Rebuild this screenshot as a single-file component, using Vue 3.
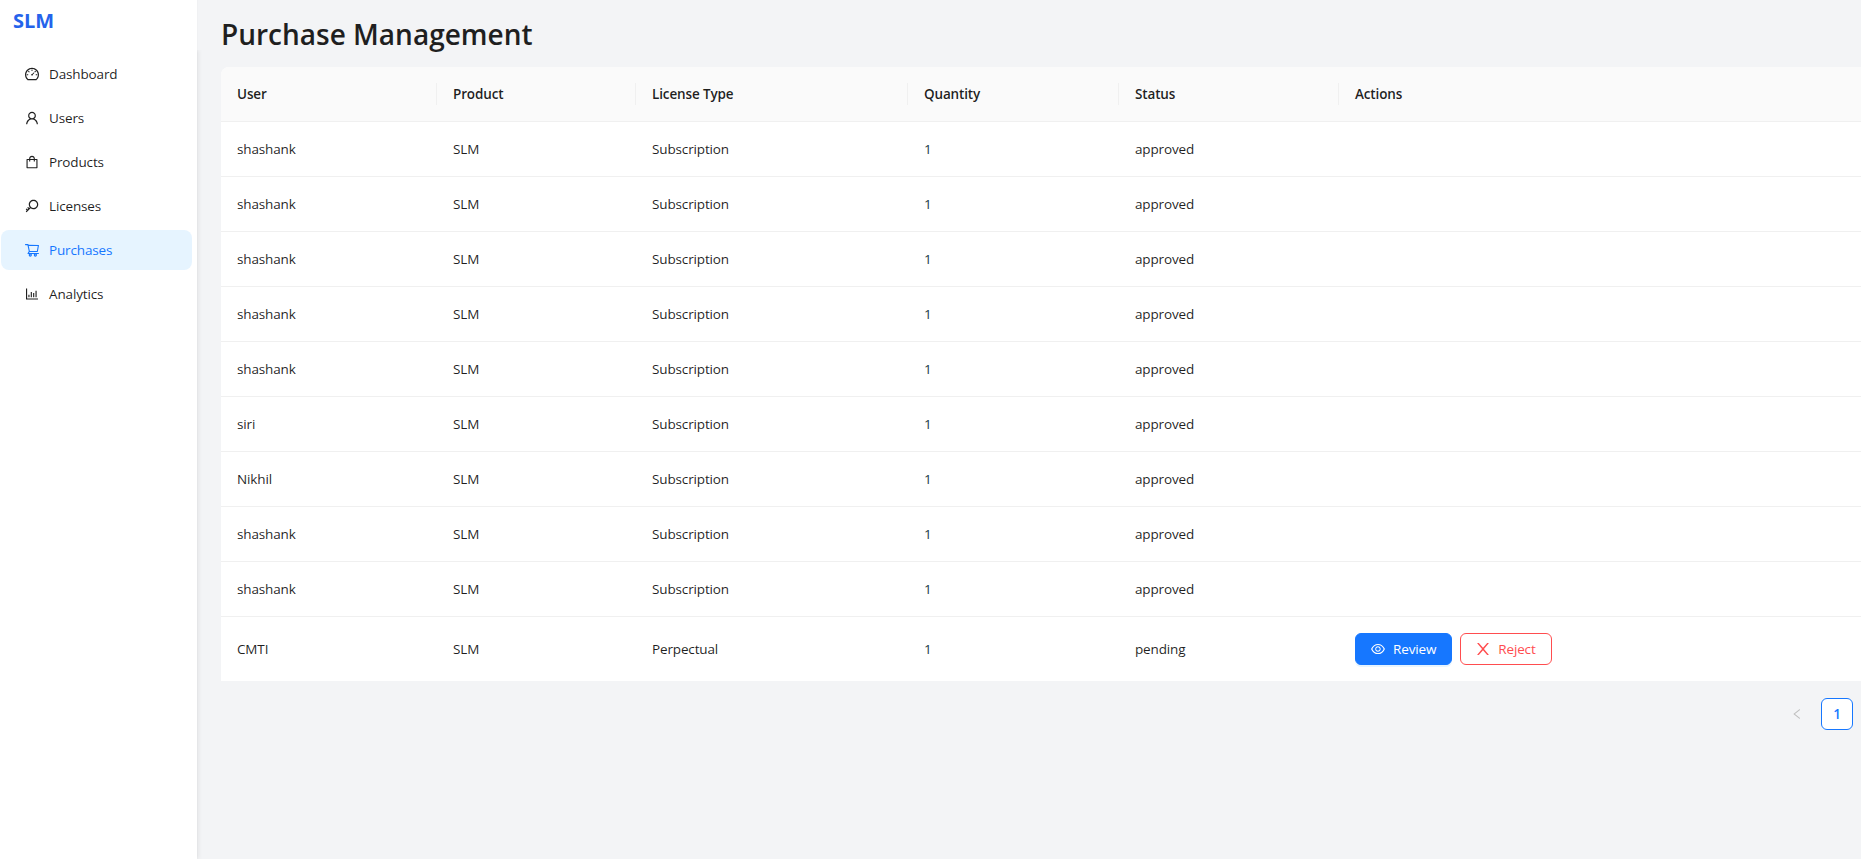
<template>
  <div class="layout">
    <aside class="sider">
      <div class="logo">SLM</div>
      <nav class="menu">
        <div v-for="m in menu" :key="m.label" class="menu-item" :class="{ active: m.label === 'Purchases' }">
          <svg class="menu-icon" viewBox="64 64 896 896" fill="currentColor"><path :d="m.icon" /></svg>
          <span>{{ m.label }}</span>
        </div>
      </nav>
    </aside>
    <main class="content">
      <h1 class="title">Purchase Management</h1>
      <table class="tbl">
        <colgroup>
          <col class="c1" />
          <col class="c2" />
          <col class="c3" />
          <col class="c4" />
          <col class="c5" />
          <col />
        </colgroup>
        <thead>
          <tr>
            <th v-for="h in headers" :key="h">{{ h }}</th>
          </tr>
        </thead>
        <tbody>
          <tr v-for="(r, i) in rows" :key="i">
            <td>{{ r.user }}</td>
            <td>SLM</td>
            <td>{{ r.type }}</td>
            <td class="qty">1</td>
            <td>{{ r.status }}</td>
            <td>
              <div v-if="r.status === 'pending'" class="actions">
                <button class="btn primary">
                  <svg viewBox="64 64 896 896" fill="currentColor"><path :d="icons.eye" /></svg>
                  Review
                </button>
                <button class="btn danger">
                  <svg viewBox="130 130 764 764" fill="currentColor"><path :d="icons.close" /></svg>
                  Reject
                </button>
              </div>
            </td>
          </tr>
        </tbody>
      </table>
      <div class="pager">
        <svg class="prev" viewBox="64 64 896 896" fill="currentColor"><path :d="icons.left" /></svg>
        <div class="page">1</div>
      </div>
    </main>
  </div>
</template>

<script setup>
const icons = {
  eye: 'M942.2 486.2C847.4 286.5 704.1 186 512 186c-192.2 0-335.4 100.5-430.2 300.3a60.3 60.3 0 0 0 0 51.5C176.6 737.5 319.9 838 512 838c192.2 0 335.4-100.5 430.2-300.3 7.7-16.2 7.7-35 0-51.5zM512 766c-161.3 0-279.4-81.8-362.7-254C232.6 339.8 350.7 258 512 258c161.3 0 279.4 81.8 362.7 254C791.5 684.2 673.4 766 512 766zm-4-430c-97.2 0-176 78.8-176 176s78.8 176 176 176 176-78.8 176-176-78.8-176-176-176zm0 288c-61.9 0-112-50.1-112-112s50.1-112 112-112 112 50.1 112 112-50.1 112-112 112z',
  close: 'M563.8 512l262.5-312.9c4.4-5.2.7-13.1-6.1-13.1h-79.8c-4.7 0-9.2 2.1-12.3 5.7L511.6 449.8 295.1 191.7c-3-3.6-7.5-5.7-12.3-5.7H203c-6.8 0-10.5 7.9-6.1 13.1L459.4 512 196.9 824.9A7.95 7.95 0 0 0 203 838h79.8c4.7 0 9.2-2.1 12.3-5.7l216.5-258.1 216.5 258.1c3 3.6 7.5 5.7 12.3 5.7h79.8c6.8 0 10.5-7.9 6.1-13.1L563.8 512z',
  left: 'M724 218.3V141c0-6.7-7.7-10.4-12.9-6.3L260.3 486.8a31.86 31.86 0 0 0 0 50.3l450.8 352.1c5.3 4.1 12.9.4 12.9-6.3v-77.3c0-4.9-2.3-9.6-6.1-12.6l-360-281 360-281.1c3.8-3 6.1-7.7 6.1-12.6z'
}

const menu = [
  { label: 'Dashboard', icon: 'M924.8 385.6a446.7 446.7 0 0 0-96-142.4 446.7 446.7 0 0 0-142.4-96C631.1 123.8 572.5 112 512 112s-119.1 11.8-174.4 35.2a446.7 446.7 0 0 0-142.4 96 446.7 446.7 0 0 0-96 142.4C75.8 440.9 64 499.5 64 560c0 132.7 58.3 257.7 159.9 343.1l1.7 1.4c5.8 4.8 13.1 7.5 20.6 7.5h531.7c7.5 0 14.8-2.7 20.6-7.5l1.7-1.4C901.7 817.7 960 692.7 960 560c0-60.5-11.8-119.1-35.2-174.4zM761.4 836H262.6A371.12 371.12 0 0 1 140 560c0-99.4 38.7-192.8 109-263 70.3-70.3 163.7-109 263-109 99.4 0 192.8 38.7 263 109 70.3 70.3 109 163.7 109 263 0 105.6-44.5 205.5-122.6 276zM623.5 421.5a8.03 8.03 0 0 0-11.3 0L527.7 506c-18.7-5-39.4-.2-54.1 14.5a55.95 55.95 0 0 0 0 79.2 55.95 55.95 0 0 0 79.2 0 55.87 55.87 0 0 0 14.5-54.1l84.5-84.5c3.1-3.1 3.1-8.2 0-11.3l-28.3-28.3zM490 320h44c4.4 0 8-3.6 8-8v-80c0-4.4-3.6-8-8-8h-44c-4.4 0-8 3.6-8 8v80c0 4.4 3.6 8 8 8zm260 218v44c0 4.4 3.6 8 8 8h80c4.4 0 8-3.6 8-8v-44c0-4.4-3.6-8-8-8h-80c-4.4 0-8 3.6-8 8zm12.7-197.2l-31.1-31.1a8.03 8.03 0 0 0-11.3 0l-56.6 56.6a8.03 8.03 0 0 0 0 11.3l31.1 31.1c3.1 3.1 8.2 3.1 11.3 0l56.6-56.6c3.1-3.1 3.1-8.2 0-11.3zm-458.6-31.1a8.03 8.03 0 0 0-11.3 0l-31.1 31.1a8.03 8.03 0 0 0 0 11.3l56.6 56.6c3.1 3.1 8.2 3.1 11.3 0l31.1-31.1c3.1-3.1 3.1-8.2 0-11.3l-56.6-56.6zM262 530h-80c-4.4 0-8 3.6-8 8v44c0 4.4 3.6 8 8 8h80c4.4 0 8-3.6 8-8v-44c0-4.4-3.6-8-8-8z' },
  { label: 'Users', icon: 'M858.5 763.6a374 374 0 0 0-80.6-119.5 375.63 375.63 0 0 0-119.5-80.6c-.4-.2-.8-.3-1.2-.5C719.5 518 760 444.7 760 362c0-137-111-248-248-248S264 225 264 362c0 82.7 40.5 156 102.8 201.1-.4.2-.8.3-1.2.5-44.8 18.9-85 46-119.5 80.6a375.63 375.63 0 0 0-80.6 119.5A371.7 371.7 0 0 0 136 901.8a8 8 0 0 0 8 8.2h60c4.4 0 7.9-3.5 8-7.8 2-77.2 33-149.5 87.8-204.3 56.7-56.7 132-87.9 212.2-87.9s155.5 31.2 212.2 87.9C779 752.7 810 825 812 902.2c.1 4.4 3.6 7.8 8 7.8h60a8 8 0 0 0 8-8.2c-1-47.8-10.9-94.3-29.5-138.2zM512 534c-45.9 0-89.1-17.9-121.6-50.4S340 407.9 340 362c0-45.9 17.9-89.1 50.4-121.6S466.1 190 512 190s89.1 17.9 121.6 50.4S684 316.1 684 362c0 45.9-17.9 89.1-50.4 121.6S557.9 534 512 534z' },
  { label: 'Products', icon: 'M832 312H696v-16c0-101.6-82.4-184-184-184s-184 82.4-184 184v16H192c-17.7 0-32 14.3-32 32v536c0 17.7 14.3 32 32 32h640c17.7 0 32-14.3 32-32V344c0-17.7-14.3-32-32-32zm-432-16c0-61.9 50.1-112 112-112s112 50.1 112 112v16H400v-16zm392 544H232V384h96v88c0 4.4 3.6 8 8 8h56c4.4 0 8-3.6 8-8v-88h224v88c0 4.4 3.6 8 8 8h56c4.4 0 8-3.6 8-8v-88h96v456z' },
  { label: 'Licenses', icon: 'M608 112c-167.9 0-304 136.1-304 304 0 70.3 23.9 135 63.9 186.5l-41.1 41.1-62.3-62.3a8.15 8.15 0 0 0-11.4 0l-39.8 39.8a8.15 8.15 0 0 0 0 11.4l62.3 62.3-44.9 44.9-62.3-62.3a8.15 8.15 0 0 0-11.4 0l-39.8 39.8a8.15 8.15 0 0 0 0 11.4l62.3 62.3-65.3 65.3a8.03 8.03 0 0 0 0 11.3l42.3 42.3c3.1 3.1 8.2 3.1 11.3 0l253.6-253.6A304.06 304.06 0 0 0 608 720c167.9 0 304-136.1 304-304S775.9 112 608 112zm161.2 465.2C726.2 620.3 668.9 644 608 644c-60.9 0-118.2-23.7-161.2-66.8-43.1-43-66.8-100.3-66.8-161.2 0-60.9 23.7-118.2 66.8-161.2 43-43.1 100.3-66.8 161.2-66.8 60.9 0 118.2 23.7 161.2 66.8 43.1 43 66.8 100.3 66.8 161.2 0 60.9-23.7 118.2-66.8 161.2z' },
  { label: 'Purchases', icon: 'M922.9 701.9H327.4l29.9-60.9 496.8-.9c16.8 0 31.2-12 34.2-28.6l68.8-385.1c1.8-10.1-.9-20.5-7.5-28.4a34.99 34.99 0 0 0-26.6-12.5l-632-2.1-5.4-25.4c-3.4-16.2-18-28-34.6-28H96.5a35.3 35.3 0 1 0 0 70.6h125.9L246 312.8l58.1 281.3-74.8 122.1a34.96 34.96 0 0 0-3 36.8c6 11.9 18.1 19.4 31.5 19.4h62.8a102.43 102.43 0 0 0-20.6 61.7c0 56.6 46 102.6 102.6 102.6s102.6-46 102.6-102.6c0-22.3-7.4-44-20.6-61.7h161.1a102.43 102.43 0 0 0-20.6 61.7c0 56.6 46 102.6 102.6 102.6s102.6-46 102.6-102.6c0-22.3-7.4-44-20.6-61.7H923c19.4 0 35.3-15.8 35.3-35.3a35.42 35.42 0 0 0-35.4-35.2zM305.7 253l575.8 1.9-56.4 315.8-452.3.8L305.7 253zm96.9 612.7c-17.4 0-31.6-14.2-31.6-31.6 0-17.4 14.2-31.6 31.6-31.6s31.6 14.2 31.6 31.6a31.6 31.6 0 0 1-31.6 31.6zm325.1 0c-17.4 0-31.6-14.2-31.6-31.6 0-17.4 14.2-31.6 31.6-31.6s31.6 14.2 31.6 31.6a31.6 31.6 0 0 1-31.6 31.6z' },
  { label: 'Analytics', icon: 'M888 792H200V168c0-4.4-3.6-8-8-8h-56c-4.4 0-8 3.6-8 8v688c0 4.4 3.6 8 8 8h752c4.4 0 8-3.6 8-8v-56c0-4.4-3.6-8-8-8zm-600-80h56c4.4 0 8-3.6 8-8V560c0-4.4-3.6-8-8-8h-56c-4.4 0-8 3.6-8 8v144c0 4.4 3.6 8 8 8zm152 0h56c4.4 0 8-3.6 8-8V384c0-4.4-3.6-8-8-8h-56c-4.4 0-8 3.6-8 8v320c0 4.4 3.6 8 8 8zm152 0h56c4.4 0 8-3.6 8-8V462c0-4.4-3.6-8-8-8h-56c-4.4 0-8 3.6-8 8v242c0 4.4 3.6 8 8 8zm152 0h56c4.4 0 8-3.6 8-8V304c0-4.4-3.6-8-8-8h-56c-4.4 0-8 3.6-8 8v400c0 4.4 3.6 8 8 8z' }
]

const headers = ['User', 'Product', 'License Type', 'Quantity', 'Status', 'Actions']

const names = ['shashank', 'shashank', 'shashank', 'shashank', 'shashank', 'siri', 'Nikhil', 'shashank', 'shashank']
const rows = names.map((user) => ({ user, type: 'Subscription', status: 'approved' }))
rows.push({ user: 'CMTI', type: 'Perpectual', status: 'pending' })
</script>

<style>
html, body { margin: 0; background: #f3f4f6; overflow: hidden; }
</style>

<style scoped>
.layout { display: flex; min-height: 859px; font-family: "Open Sans", "Noto Sans", sans-serif; font-size: 13.5px; letter-spacing: -0.14px; color: rgba(0,0,0,0.88); }
.sider { width: 197px; flex: none; display: flex; flex-direction: column; background: #fff; box-shadow: 1px 0 0 #f0f1f3; }
.logo { padding: 8px 13px 0; font-size: 20px; font-weight: 700; line-height: 26px; letter-spacing: 0; color: #2563eb; height: 50px; box-sizing: border-box; }
.menu { flex: 1; padding: 4px 5px 0 1px; box-shadow: 2px 0 4px rgba(0,0,0,0.06); clip-path: inset(0 -8px 0 0); }
.menu-item { display: flex; align-items: center; gap: 10px; height: 40px; margin-bottom: 4px; padding-left: 24px; border-radius: 8px; }
.menu-item.active { background: #e6f4ff; color: #1677ff; }
.menu-icon { width: 14px; height: 14px; flex: none; }
.content { flex: 1; min-width: 0; padding: 16px 0 0 24px; }
.title { margin: 0 0 15px; font-size: 28px; font-weight: 600; line-height: 36px; letter-spacing: 0; color: #1f1f1f; }
.tbl { width: 100%; border-collapse: separate; border-spacing: 0; table-layout: fixed; background: #fff; border-radius: 8px 0 0 0; }
.c1 { width: 216px; }
.c2 { width: 199px; }
.c3 { width: 272px; }
.c4 { width: 211px; }
.c5 { width: 220px; }
th { position: relative; height: 54px; padding: 0 16px; text-align: left; font-weight: 600; background: #fafafa; border-bottom: 1px solid #f0f0f0; }
th:first-child { border-top-left-radius: 8px; }
th:not(:last-child)::after { content: ""; position: absolute; right: 0; top: 50%; width: 1px; height: 22px; margin-top: -11px; background: #f0f0f0; }
td { height: 54px; padding: 0 16px; border-bottom: 1px solid #f0f0f0; }
tbody tr:last-child td { height: 64px; border-bottom: 0; }
.qty { color: #1a3a44; }
.actions { display: flex; gap: 8px; }
.btn { display: inline-flex; align-items: center; gap: 8px; height: 32px; padding: 0 15px; border-radius: 6px; font: inherit; letter-spacing: inherit; border: 1px solid; background: #fff; }
.btn svg { width: 14px; height: 14px; }
.btn.primary { background: #1677ff; border-color: #1677ff; color: #fff; box-shadow: 0 2px 0 rgba(5,145,255,0.1); }
.btn.danger { color: #ff4d4f; border-color: #ff4d4f; }
.pager { display: flex; justify-content: flex-end; align-items: center; gap: 8px; margin-top: 17px; padding-right: 8px; }
.prev { width: 12px; height: 12px; color: #bfbfbf; margin-right: 10px; }
.page { width: 32px; height: 32px; box-sizing: border-box; border: 1px solid #1677ff; border-radius: 6px; background: #fff; color: #1677ff; font-weight: 600; display: flex; align-items: center; justify-content: center; }
</style>
